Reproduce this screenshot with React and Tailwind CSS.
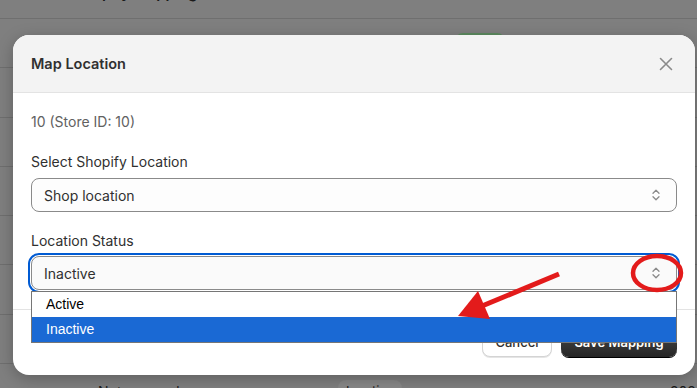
import { useState } from 'react';

const rows = [
  { badge: 'green' },
  {},
  {},
  {},
  {},
  {},
  {},
  { name: 'Not mapped', status: 'Inactive', date: '2024-05-12' },
];

const ChevronUpDown = () => (
  <svg width="10" height="14" viewBox="0 0 10 14" fill="none" stroke="#8a8a8a" strokeWidth="1.3" strokeLinecap="round" strokeLinejoin="round">
    <path d="M2 5.2 5 2.2 8 5.2" />
    <path d="M2 8.8 5 11.8 8 8.8" />
  </svg>
);

const App = () => {
  const [status] = useState('Inactive');

  return (
    <div className="relative w-[697px] h-[388px] overflow-hidden bg-[#7f7f7f] font-['Inter','Noto_Sans',sans-serif] text-[#303030]">
      {/* page behind the overlay */}
      <div className="flex flex-col">
        <div className="h-[19px] border-b border-[#6f6f6f] overflow-hidden">
          <div className="-mt-[17px] pl-[74px] text-[15px] font-semibold text-[#1a1a1a] leading-[20px]">Shopify Mapping</div>
        </div>
        {rows.map((r, i) => (
          <div key={i} className="h-[49.3px] border-b border-[#6f6f6f] flex items-start text-[14px] text-[#1a1a1a] shrink-0">
            <div className="w-[98px] shrink-0" />
            <div className="w-[240px] shrink-0 pt-[17px]">{r.name}</div>
            <div className="w-[117px] shrink-0 pt-[16px]">
              {r.status && <span className="px-2 py-[3px] rounded-lg bg-[#888888] text-[13px]">{r.status}</span>}
            </div>
            <div className="w-[215px] shrink-0 pt-[14px]">
              {r.badge && <div className="w-[50px] h-[20px] rounded-lg bg-[#5c8a5f]" />}
            </div>
            <div className="pt-[17px] whitespace-nowrap">{r.date}</div>
          </div>
        ))}
      </div>

      {/* modal */}
      <div className="absolute left-[13px] top-[35px] w-[682px] h-[340px] rounded-[16px] bg-white overflow-hidden flex flex-col shadow-[0_4px_16px_rgba(0,0,0,0.25)]">
        <div className="h-[58px] shrink-0 bg-[#f3f3f3] border-b border-[#e3e3e3] flex items-center justify-between pl-[18px] pr-[22px]">
          <h2 className="text-[14.5px] font-semibold">Map Location</h2>
          <svg width="14" height="14" viewBox="0 0 14 14" stroke="#8a8a8a" strokeWidth="1.6" strokeLinecap="round">
            <path d="M1.5 1.5 12.5 12.5M12.5 1.5 1.5 12.5" />
          </svg>
        </div>

        <div className="flex-1 px-[18px] pt-[19px] flex flex-col">
          <p className="text-[14px] leading-[20px] text-[#616161]">10 (Store ID: 10)</p>

          <label className="mt-[20px] text-[14px] leading-[20px]">Select Shopify Location</label>
          <div className="mt-[6px] h-[34px] rounded-[8px] border border-[#8a8a8a] bg-[#fdfdfd] flex items-center justify-between pl-[12px] pr-[15px] text-[14px]">
            <span>Shop location</span>
            <ChevronUpDown />
          </div>

          <label className="mt-[19px] text-[14px] leading-[20px]">Location Status</label>
          <div className="mt-[5px] h-[34px] rounded-[8px] border border-[#8a8a8a] bg-[#fafafa] outline-2 outline-[#005bd3] outline-offset-1 flex items-center justify-between pl-[12px] pr-[15px] text-[14px]">
            <span>{status}</span>
            <ChevronUpDown />
          </div>
        </div>

        <div className="h-[66px] shrink-0 border-t border-[#e3e3e3] flex items-center justify-end gap-[9px] pr-[18px]">
          <button className="h-[28px] w-[70px] rounded-[8px] border border-[#d4d4d4] bg-white text-[13px] font-medium shadow-[0_1px_0_rgba(0,0,0,0.1)]">Cancel</button>
          <button className="h-[28px] w-[116px] rounded-[8px] bg-gradient-to-b from-[#4a4a4a] to-[#262626] text-white text-[13px] font-semibold shadow-[0_1px_0_#000]">Save Mapping</button>
        </div>

        {/* native dropdown list */}
        <div className="absolute left-[18px] top-[256px] w-[646px] border border-[#767676] bg-white font-['Liberation_Sans',Arial,sans-serif] text-[14px]">
          <div className="h-[25px] flex items-center pl-[14px] text-black">Active</div>
          <div className="h-[25px] flex items-center pl-[14px] bg-[#1a69d4] text-white">Inactive</div>
        </div>
      </div>

      {/* annotation */}
      <svg className="absolute inset-0 pointer-events-none" width="697" height="388">
        <ellipse cx="657" cy="273" rx="24" ry="17" fill="none" stroke="#e31b1b" strokeWidth="4.5" />
        <line x1="559" y1="274" x2="482" y2="306" stroke="#e31b1b" strokeWidth="5" />
        <polygon points="458,316 478,291 490,319" fill="#e31b1b" />
      </svg>
    </div>
  );
};

export default App;
